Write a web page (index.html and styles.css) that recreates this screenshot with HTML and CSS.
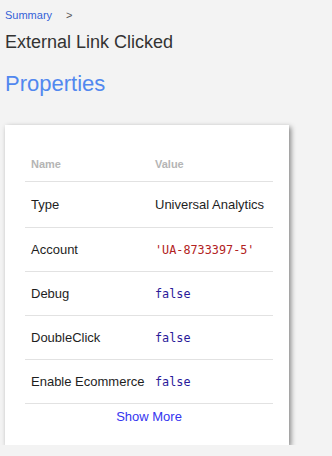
FILE: index.html
```html
<!DOCTYPE html>
<html>
<head>
<meta charset="utf-8">
<link rel="stylesheet" href="styles.css">
</head>
<body>
<div class="page">
  <nav class="crumbs"><a class="crumb-link">Summary</a><span class="crumb-sep">&gt;</span></nav>
  <h1 class="title">External Link Clicked</h1>
  <h2 class="section">Properties</h2>
  <div class="card">
    <table class="props">
      <thead>
        <tr class="head-row"><th class="col-name">Name</th><th>Value</th></tr>
      </thead>
      <tbody>
        <tr class="row row-first"><td>Type</td><td>Universal Analytics</td></tr>
        <tr class="row"><td>Account</td><td><code class="str">'UA-8733397-5'</code></td></tr>
        <tr class="row"><td>Debug</td><td><code class="kw">false</code></td></tr>
        <tr class="row"><td>DoubleClick</td><td><code class="kw">false</code></td></tr>
        <tr class="row"><td>Enable Ecommerce</td><td><code class="kw">false</code></td></tr>
      </tbody>
    </table>
    <div class="more"><a class="more-link">Show More</a></div>
  </div>
</div>
</body>
</html>
```
FILE: styles.css
```css
html, body {
  margin: 0;
  padding: 0;
  background: #f3f3f3;
  font-family: "Liberation Sans", Arial, sans-serif;
}
.page {
  padding: 9px 5px 0 5px;
}
.crumbs {
  font-size: 11px;
  line-height: 13px;
  height: 13px;
  display: flex;
  gap: 14px;
}
.crumb-link {
  color: #3462d8;
}
.crumb-sep {
  color: #555;
}
.title {
  margin: 9px 0 0 0;
  font-size: 18px;
  line-height: 22px;
  font-weight: normal;
  color: #333;
}
.section {
  margin: 18px 0 0 0;
  font-size: 22px;
  line-height: 26px;
  font-weight: normal;
  color: #5188ef;
}
.card {
  margin-top: 28px;
  width: 284px;
  box-sizing: border-box;
  height: 320px;
  background: #fff;
  box-shadow: 2px 2px 5px rgba(0, 0, 0, 0.45);
  padding: 21px 16px 0 20px;
}
.props {
  width: 100%;
  border-collapse: collapse;
  font-size: 13px;
  color: #1e1e1e;
}
.props th {
  text-align: left;
  font-size: 11px;
  font-weight: bold;
  color: #b5b5b5;
  height: 35px;
  padding: 0 6px;
  vertical-align: middle;
  border-bottom: 1px solid #e2e2e2;
}
.props th.col-name {
  width: 112px;
}
.row td {
  height: 43px;
  padding: 0 0 0 6px;
  vertical-align: middle;
  border-bottom: 1px solid #e2e2e2;
  white-space: nowrap;
}
.row-first td {
  height: 45px;
}
.str, .kw {
  font-family: "DejaVu Sans Mono", "Liberation Mono", monospace;
  font-size: 11.8px;
}
.str {
  color: #b22222;
}
.kw {
  color: #2a1a9a;
}
.more {
  text-align: center;
  font-size: 13px;
  line-height: 15px;
  padding-top: 5px;
}
.more-link {
  color: #3434f0;
}
```
